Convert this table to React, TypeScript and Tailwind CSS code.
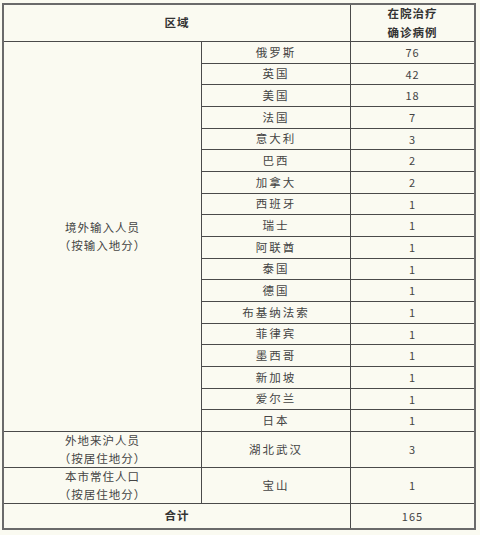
import React from 'react';

const abroad: [string, string][] = [
  ['俄罗斯', '76'],
  ['英国', '42'],
  ['美国', '18'],
  ['法国', '7'],
  ['意大利', '3'],
  ['巴西', '2'],
  ['加拿大', '2'],
  ['西班牙', '1'],
  ['瑞士', '1'],
  ['阿联酋', '1'],
  ['泰国', '1'],
  ['德国', '1'],
  ['布基纳法索', '1'],
  ['菲律宾', '1'],
  ['墨西哥', '1'],
  ['新加坡', '1'],
  ['爱尔兰', '1'],
  ['日本', '1'],
];

const cell = 'bg-[#fafaf1] flex items-center justify-center text-center';

const App: React.FC = () => {
  return (
    <div
      className="w-[480px] h-[535px] bg-[#fafaf1] pl-[2px] pt-[3px] text-[11.5px] text-[#444] tracking-[1px]"
      style={{ fontFamily: '"Noto Sans CJK SC", "Liberation Serif", serif' }}
    >
      <div className="w-[474px] border-2 border-[#6a6a6a] bg-[#4a4a4a] grid grid-cols-[197px_148px_123px] grid-rows-[36px_repeat(18,20.67px)_35px_35px_24px] gap-px">
        {/* Header */}
        <div className={`${cell} col-span-2 font-bold text-[#333]`}>区域</div>
        <div className={`${cell} flex-col font-bold leading-[19px] text-[#333]`}>
          <span>在院治疗</span>
          <span>确诊病例</span>
        </div>

        {/* Abroad */}
        <div className={`${cell} row-span-18 flex-col leading-[18px]`}>
          <span>境外输入人员</span>
          <span>（按输入地分）</span>
        </div>
        {abroad.map(([name, n]) => (
          <React.Fragment key={name}>
            <div className={`${cell} tracking-[2px]`}>{name}</div>
            <div className={`${cell} text-[11px]`}>{n}</div>
          </React.Fragment>
        ))}

        {/* Other provinces */}
        <div className={`${cell} flex-col leading-[18px]`}>
          <span>外地来沪人员</span>
          <span>（按居住地分）</span>
        </div>
        <div className={`${cell} tracking-[2px]`}>湖北武汉</div>
        <div className={`${cell} text-[11px]`}>3</div>

        {/* Local */}
        <div className={`${cell} flex-col leading-[18px]`}>
          <span>本市常住人口</span>
          <span>（按居住地分）</span>
        </div>
        <div className={`${cell} tracking-[2px]`}>宝山</div>
        <div className={`${cell} text-[11px]`}>1</div>

        {/* Total */}
        <div className={`${cell} col-span-2 font-bold text-[#333]`}>合计</div>
        <div className={`${cell} text-[11px]`}>165</div>
      </div>
    </div>
  );
};

export default App;
